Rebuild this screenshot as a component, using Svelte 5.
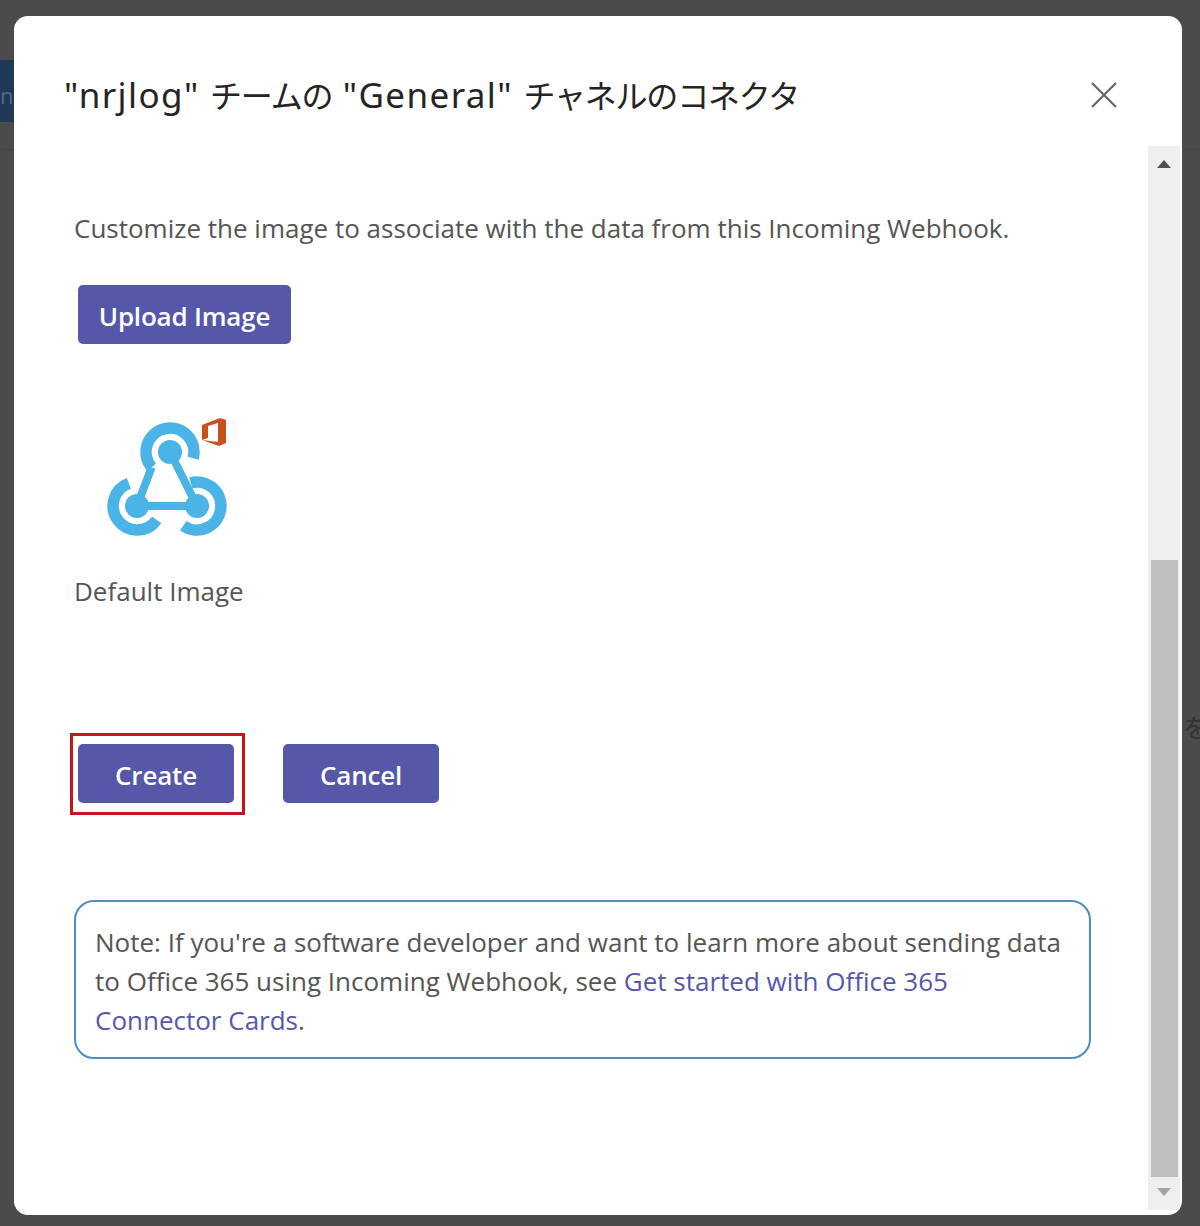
<script>
	let teamName = 'nrjlog';
	let channelName = 'General';
</script>

<div class="backdrop">
	<div class="page-tab">n</div>
	<div class="page-line"></div>
	<div class="page-text">を</div>

	<main class="dialog">
		<header class="dialog-header">
			<h1>"{teamName}" <span class="ja">チームの</span> "{channelName}" <span class="ja">チャネルのコネクタ</span></h1>
			<button class="close" aria-label="Close">
				<svg viewBox="0 0 26 26" width="26" height="26">
					<path d="M1 1 L25 25 M25 1 L1 25" fill="none" stroke="#666" stroke-width="2.2" />
				</svg>
			</button>
		</header>

		<div class="dialog-body">
			<div class="content">
				<p class="intro">Customize the image to associate with the data from this Incoming Webhook.</p>
				<button class="primary upload">Upload Image</button>

				<svg class="webhook" viewBox="100 410 135 130" width="135" height="130">
					<g fill="none" stroke="#4ab4e6" stroke-width="11.5">
						<path d="M151.6 467.4 A24 24 0 1 1 193.2 458.2" />
						<path d="M128.8 483.4 A24 24 0 1 0 156.7 519.8" />
						<path d="M183.2 525.7 A24 24 0 1 0 190.8 482.8" />
					</g>
					<path d="M151.6 467.4 L137 506 M170 452 L197 506 M137 506 L197 506" fill="none" stroke="#4ab4e6" stroke-width="8" />
					<g fill="#4ab4e6">
						<circle cx="170" cy="452" r="12" />
						<circle cx="137" cy="506" r="12" />
						<circle cx="197" cy="506" r="12" />
					</g>
					<path d="M202 425 L220 418 L226 420 L226 443 L219 446 L202 440 L218 442 L218 423 L208 426 L208 438 L202 440 Z" fill="#c8501f" />
				</svg>
				<div class="caption">Default Image</div>

				<div class="actions">
					<div class="highlight">
						<button class="primary action">Create</button>
					</div>
					<button class="primary action cancel">Cancel</button>
				</div>

				<div class="note">
					Note: If you're a software developer and want to learn more about sending data to Office 365 using Incoming Webhook, see <span class="link">Get started with Office 365 Connector Cards</span>.
				</div>
			</div>

			<div class="scrollbar">
				<div class="arrow up"></div>
				<div class="track"><div class="thumb"></div></div>
				<div class="arrow down"></div>
			</div>
		</div>
	</main>
</div>

<style>
	:global(body) {
		margin: 0;
		background: #4b4b4b;
	}

	.backdrop {
		position: relative;
		box-sizing: border-box;
		width: 1200px;
		height: 1226px;
		padding: 16px 18px 11px 14px;
		background: #4b4b4b;
		overflow: hidden;
		font-family: "Open Sans", "Noto Sans CJK JP", sans-serif;
	}

	.page-tab {
		position: absolute;
		left: 0;
		top: 60px;
		width: 14px;
		height: 62px;
		background: #1f3858;
		color: #5a6b80;
		font-size: 22px;
		line-height: 70px;
		overflow: hidden;
	}

	.page-line {
		position: absolute;
		left: 0;
		top: 149px;
		width: 1200px;
		height: 1px;
		background: #444;
	}

	.page-text {
		position: absolute;
		left: 1183px;
		top: 708px;
		color: #333;
		font-size: 26px;
		font-family: "Noto Sans CJK JP", sans-serif;
	}

	.dialog {
		position: relative;
		display: flex;
		flex-direction: column;
		height: 100%;
		background: #fff;
		border-radius: 14px;
		overflow: hidden;
	}

	.dialog-header {
		display: flex;
		justify-content: space-between;
		align-items: center;
		height: 130px;
		flex: none;
		padding: 26px 65px 0 50px;
		box-sizing: border-box;
	}

	h1 {
		margin: 0;
		font-size: 35px;
		font-weight: 400;
		letter-spacing: 1.4px;
		color: #252423;
		white-space: nowrap;
		font-family: "Noto Sans", "Noto Sans CJK JP", sans-serif;
	}

	.ja {
		font-size: 32px;
		letter-spacing: -1.2px;
	}

	.close {
		display: flex;
		padding: 0;
		margin-top: 2px;
		border: 0;
		background: none;
	}

	.dialog-body {
		display: flex;
		flex: 1;
		min-height: 0;
	}

	.content {
		flex: 1;
		padding: 62px 50px 0 60px;
		color: #555;
		font-size: 26px;
	}

	.intro {
		margin: 0 0 37px;
		line-height: 40px;
		white-space: nowrap;
	}

	.primary {
		display: block;
		border: 0;
		border-radius: 5px;
		background: #5558a9;
		color: #fff;
		font-family: inherit;
		font-size: 26px;
		font-weight: 600;
		letter-spacing: -0.2px;
		height: 59px;
		padding: 3px 0 0;
	}

	.upload {
		width: 213px;
		margin-left: 4px;
	}

	.webhook {
		display: block;
		margin: 66px 0 0 26px;
	}

	.caption {
		line-height: 38px;
		margin: 32px 0 0;
	}

	.actions {
		display: flex;
		align-items: center;
		gap: 38px;
		margin: 123px 0 0 -4px;
	}

	.highlight {
		border: 3px solid #c5161d;
		padding: 8px 8px 9px 5px;
	}

	.action {
		width: 156px;
	}

	.cancel {
		margin-bottom: 2px;
	}

	.note {
		box-sizing: border-box;
		width: 1017px;
		height: 159px;
		margin-top: 85px;
		padding: 21px 19px 0;
		border: 2px solid #4f8cc4;
		border-radius: 20px;
		line-height: 39px;
	}

	.link {
		color: #5558a9;
	}

	.scrollbar {
		display: flex;
		flex-direction: column;
		flex: none;
		width: 32px;
		margin: 0 2px 5px 0;
		background: #efefef;
	}

	.arrow {
		flex: none;
		position: relative;
	}

	.up {
		height: 36px;
	}

	.down {
		height: 33px;
	}

	.arrow::after {
		content: "";
		position: absolute;
		left: 9px;
		border-left: 7px solid transparent;
		border-right: 7px solid transparent;
	}

	.up::after {
		top: 14px;
		border-bottom: 8px solid #505050;
	}

	.down::after {
		top: 11px;
		border-top: 8px solid #a3a3a3;
	}

	.track {
		display: flex;
		flex-direction: column;
		justify-content: flex-end;
		flex: 1;
		padding: 0 2px 0 3px;
	}

	.thumb {
		height: 617px;
		background: #bfbfbf;
	}
</style>
